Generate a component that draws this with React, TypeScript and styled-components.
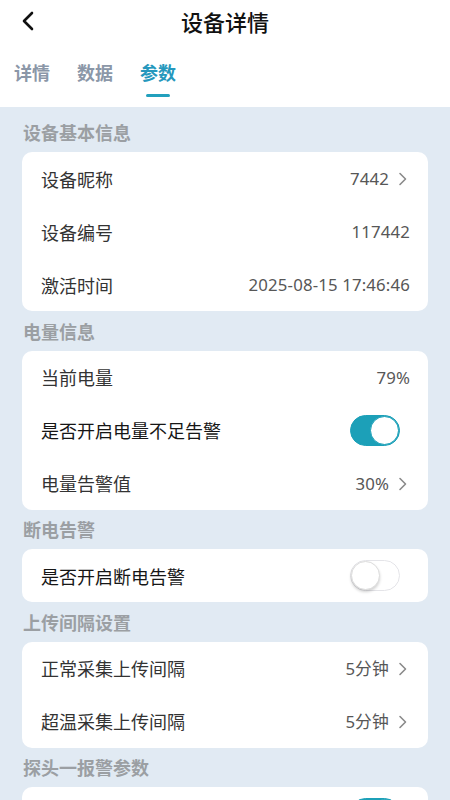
import React, { useState } from "react";
import styled, { createGlobalStyle } from "styled-components";

const GlobalStyle = createGlobalStyle`
  html, body { margin: 0; padding: 0; }
  body {
    background: #e1eaf3;
    font-family: "Noto Sans", "Noto Sans CJK SC", sans-serif;
    -webkit-font-smoothing: antialiased;
  }
  * { box-sizing: border-box; }
`;

const Page = styled.div`
  width: 450px;
  height: 800px;
  overflow: hidden;
  background: #e1eaf3;
`;

const Header = styled.header`
  background: #ffffff;
`;

const NavBar = styled.div`
  height: 42px;
  position: relative;
  display: flex;
  align-items: center;
  justify-content: center;
`;

const BackButton = styled.button`
  position: absolute;
  left: 16px;
  top: 9px;
  width: 24px;
  height: 24px;
  padding: 0;
  border: none;
  background: transparent;
  display: flex;
  align-items: center;
  justify-content: center;
`;

const Title = styled.h1`
  margin: 0;
  font-size: 22px;
  line-height: 28px;
  font-weight: 500;
  color: #111111;
  font-family: "Noto Sans CJK SC", sans-serif;
`;

const TabBar = styled.nav`
  display: flex;
  gap: 27px;
  padding: 18px 14px 10px;
`;

const Tab = styled.div<{ $active?: boolean }>`
  display: flex;
  flex-direction: column;
  align-items: center;
  font-family: "Noto Sans CJK SC", sans-serif;
  font-size: 18px;
  line-height: 24px;
  font-weight: 700;
  color: ${(p) => (p.$active ? "#2598bd" : "#8b97a8")};
`;

const TabLine = styled.span<{ $active?: boolean }>`
  margin-top: 10px;
  width: 24px;
  height: 3px;
  border-radius: 2px;
  background: ${(p) => (p.$active ? "#22a0bd" : "transparent")};
`;

const Content = styled.main`
  padding: 5.5px 22px 0;
`;

const SectionTitle = styled.h2`
  margin: 0;
  height: 39.5px;
  display: flex;
  align-items: center;
  padding-left: 1px;
  font-family: "Noto Sans CJK SC", sans-serif;
  font-size: 18px;
  font-weight: 700;
  color: #9b9fa3;
`;

const Card = styled.section`
  background: #ffffff;
  border-radius: 10px;
  overflow: hidden;
`;

const Row = styled.div`
  height: 53px;
  display: flex;
  align-items: center;
  justify-content: space-between;
  padding: 0 18px 0 19px;
`;

const Label = styled.span<{ $strong?: boolean }>`
  font-family: "Noto Sans CJK SC", sans-serif;
  font-size: 18px;
  color: ${(p) => (p.$strong ? "#161616" : "#333333")};
`;

const ValueWrap = styled.span`
  display: flex;
  align-items: center;
  gap: 8px;
`;

const Value = styled.span`
  font-family: "Noto Sans", "Noto Sans CJK SC", sans-serif;
  font-size: 16.8px;
  letter-spacing: 0.15px;
  color: #575757;
`;

const Chevron = styled.svg`
  width: 12px;
  height: 14px;
  margin-right: 1px;
  margin-top: 1px;
`;

const Switch = styled.button<{ $on: boolean }>`
  position: relative;
  width: 50px;
  height: 31px;
  padding: 0;
  margin-left: auto;
  margin-right: 10px;
  border-radius: 16px;
  border: 1px solid ${(p) => (p.$on ? "#1ca0b8" : "#e4e4e8")};
  background: ${(p) => (p.$on ? "#1ca0b8" : "#ffffff")};
  cursor: pointer;
`;

const Knob = styled.span<{ $on: boolean }>`
  position: absolute;
  top: 0px;
  left: ${(p) => (p.$on ? "19px" : "0px")};
  width: 29px;
  height: 29px;
  border-radius: 50%;
  background: #ffffff;
  border: 1px solid ${(p) => (p.$on ? "#1ca0b8" : "#dcdcdc")};
  box-shadow: ${(p) => (p.$on ? "none" : "0 2px 3px rgba(0,0,0,0.18)")};
`;

const ArrowRight = () => (
  <Chevron viewBox="0 0 12 14">
    <path d="M3 1.5 L8.5 7 L3 12.5" fill="none" stroke="#8a8a8a" strokeWidth="1.6" strokeLinecap="round" strokeLinejoin="round" />
  </Chevron>
);

type Item =
  | { label: string; value: string; arrow?: boolean }
  | { label?: string; toggle: boolean };

const sections: { title: string; items: Item[] }[] = [
  {
    title: "设备基本信息",
    items: [
      { label: "设备昵称", value: "7442", arrow: true },
      { label: "设备编号", value: "117442" },
      { label: "激活时间", value: "2025-08-15 17:46:46" },
    ],
  },
  {
    title: "电量信息",
    items: [
      { label: "当前电量", value: "79%" },
      { label: "是否开启电量不足告警", toggle: true },
      { label: "电量告警值", value: "30%", arrow: true },
    ],
  },
  {
    title: "断电告警",
    items: [{ label: "是否开启断电告警", toggle: false }],
  },
  {
    title: "上传间隔设置",
    items: [
      { label: "正常采集上传间隔", value: "5分钟", arrow: true },
      { label: "超温采集上传间隔", value: "5分钟", arrow: true },
    ],
  },
  {
    title: "探头一报警参数",
    items: [{ toggle: true }],
  },
];

const ToggleRow = ({ label, initial }: { label?: string; initial: boolean }) => {
  const [on, setOn] = useState(initial);
  return (
    <Row>
      {label && <Label $strong>{label}</Label>}
      <Switch $on={on} onClick={() => setOn(!on)} aria-pressed={on}>
        <Knob $on={on} />
      </Switch>
    </Row>
  );
};

export default function App() {
  const tabs = ["详情", "数据", "参数"];
  return (
    <Page>
      <GlobalStyle />
      <Header>
        <NavBar>
          <BackButton aria-label="返回">
            <svg width="14" height="20" viewBox="0 0 14 20">
              <path d="M11 2 L3 10 L11 18" fill="none" stroke="#111" strokeWidth="2.6" strokeLinecap="round" strokeLinejoin="round" />
            </svg>
          </BackButton>
          <Title>设备详情</Title>
        </NavBar>
        <TabBar>
          {tabs.map((t, i) => (
            <Tab key={t} $active={i === 2}>
              {t}
              <TabLine $active={i === 2} />
            </Tab>
          ))}
        </TabBar>
      </Header>
      <Content>
        {sections.map((s) => (
          <React.Fragment key={s.title}>
            <SectionTitle>{s.title}</SectionTitle>
            <Card>
              {s.items.map((it, idx) =>
                "toggle" in it ? (
                  <ToggleRow key={idx} label={it.label} initial={it.toggle} />
                ) : (
                  <Row key={it.label}>
                    <Label>{it.label}</Label>
                    <ValueWrap>
                      <Value>{it.value}</Value>
                      {it.arrow && <ArrowRight />}
                    </ValueWrap>
                  </Row>
                )
              )}
            </Card>
          </React.Fragment>
        ))}
      </Content>
    </Page>
  );
}
